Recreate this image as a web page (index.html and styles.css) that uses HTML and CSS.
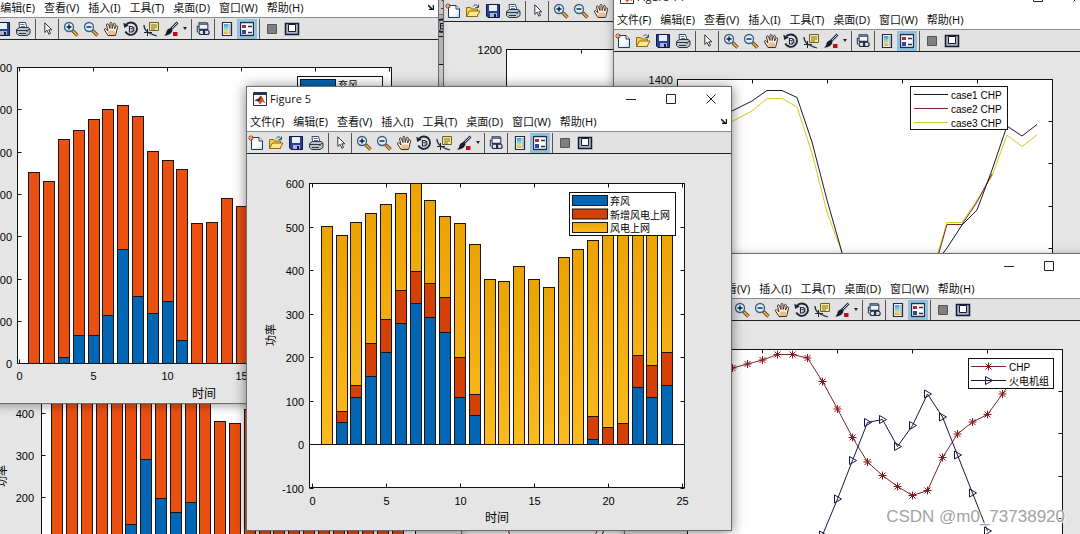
FILE: index.html
```html
<!DOCTYPE html>
<html lang="zh-CN">
<head>
<meta charset="utf-8">
<title>Figure 5</title>
<link rel="stylesheet" href="styles.css">
</head>
<body>
<svg class="sprites" aria-hidden="true">
  <defs>
    <linearGradient id="g-page" x1="0" y1="0" x2="1" y2="1"><stop offset="0.5" stop-color="#fff"/><stop offset="1" stop-color="#c4dcf2"/></linearGradient>
    <linearGradient id="g-bar" x1="0" y1="0" x2="0" y2="1"><stop offset="0" stop-color="#5a8fd8"/><stop offset="0.35" stop-color="#69cfe0"/><stop offset="0.7" stop-color="#e8df70"/><stop offset="1" stop-color="#f0a040"/></linearGradient>
    <linearGradient id="g-wind" x1="0" y1="0" x2="0" y2="1"><stop offset="0" stop-color="#eba202"/><stop offset="1" stop-color="#fcba20"/></linearGradient>
  </defs>
  <symbol id="i-new" viewBox="0 0 16 16"><path d="M3.5 2.5h7.5l3.500 3.500v8.500h-11z" fill="url(#g-page)" stroke="#1f3556"/><path d="M11 2.500v3.500h3.500" fill="#fff" stroke="#1f3556"/><path d="M0 3h6M3 0v6M1 1l4 4M5 1L1 5" stroke="#b8431c"/><circle cx="3" cy="3" r="1" fill="#ffd080"/></symbol>
  <symbol id="i-open" viewBox="0 0 16 16"><path d="M1.500 13.500v-9h4l1 1.500h6v7.500z" fill="#f5cf4a" stroke="#8a6a14"/><path d="M1.500 13.500l3-5.500h10.500l-3 5.500z" fill="#ffe98a" stroke="#8a6a14"/><path d="M8 3.500c2-2.500 4-2 5 .5M13.500 1.500v3h-3" fill="none" stroke="#2a4a7a"/></symbol>
  <symbol id="i-save" viewBox="0 0 16 16"><path d="M1.500 1.500h13v13h-11.500l-1.500-1.500z" fill="#27409a" stroke="#0d1747"/><path d="M4 2h8v6H4z" fill="#e8f0fb"/><path d="M5 10h7v4H5z" fill="#aab4cc"/><path d="M9 11h2v3H9z" fill="#101c48"/></symbol>
  <symbol id="i-print" viewBox="0 0 16 16"><path d="M4.500 7L4 1.500h6.500L12 7z" fill="#fff" stroke="#3a4a66"/><path d="M5.500 3.500h4M6 5.500h4" stroke="#5577aa"/><path d="M1.500 8.500l3-2h9l1.500 2v4l-3 2h-8l-2.500-2z" fill="#bcc4cf" stroke="#2c3442"/><path d="M2 9.500h10l3-1.500M4 12.500h7" stroke="#2c3442" fill="none"/><path d="M11 10.500h2" stroke="#4aa04a"/></symbol>
  <symbol id="i-pointer" viewBox="0 0 16 16"><path d="M5.500 1.500v11l2.600-2.500 2 4.500 1.900-.9-2-4.100h3.500z" fill="#fff" stroke="#151a26"/></symbol>
  <symbol id="i-zin" viewBox="0 0 16 16"><path d="M9.500 9.500l5 5" stroke="#6b4515" stroke-width="3.400"/><path d="M10 10l4.500 4.500" stroke="#eeb357" stroke-width="1.600"/><circle cx="6" cy="6" r="4.500" fill="#d9f1fc" stroke="#3a5b86" stroke-width="1.300"/><path d="M3.500 6h5M6 3.500v5" stroke="#101c30" stroke-width="1.400"/></symbol>
  <symbol id="i-zout" viewBox="0 0 16 16"><path d="M9.500 9.500l5 5" stroke="#6b4515" stroke-width="3.400"/><path d="M10 10l4.500 4.500" stroke="#eeb357" stroke-width="1.600"/><circle cx="6" cy="6" r="4.500" fill="#d9f1fc" stroke="#3a5b86" stroke-width="1.300"/><path d="M3.500 6h5" stroke="#101c30" stroke-width="1.400"/></symbol>
  <symbol id="i-pan" viewBox="0 0 16 16"><path d="M5 14.500L1.500 9c-.5-1.500 1-2 2-.5L5 10 3.500 4c0-1.500 1.500-1.500 2-.3L7 7.500V2.300C7 1 8.700 1 8.900 2.300L9.200 7.500 10.500 3c.4-1.200 2-.8 1.800.5L11.500 8l1.500-2.700c.7-1 2-.3 1.600.9L12.500 14.500z" fill="#fff3e4" stroke="#3d302a"/><path d="M5.500 14c-1-3 0-4.500 3.500-4.500s4 2 3 4.500z" fill="#efbd8c"/></symbol>
  <symbol id="i-rotate" viewBox="0 0 16 16"><path d="M3 3.800A6.200 6.200 0 1 1 2.300 10.500" fill="none" stroke="#1d2636" stroke-width="1.900"/><path d="M.3 1.800l.9 5.200 4.600-2.600z" fill="#1d2636"/><path d="M6.500 5.500h2.500l1.800 1.500v2.500l-1.800 1.500H6.500z" fill="#f4f7fb" stroke="#1d2636" stroke-width="1.200"/><path d="M6.500 7.500h2.500v3M9 7.500l1.500-.8" fill="none" stroke="#1d2636" stroke-width=".7"/></symbol>
  <symbol id="i-cursor" viewBox="0 0 16 16"><path d="M6.500 1.500h9v8h-9z" fill="#f6e894" stroke="#6e6024"/><path d="M8 4h6M8 6h6M8 8h4" stroke="#7e6f2a"/><path d="M1 4c0 5 3 8 13 11" fill="none" stroke="#22345a" stroke-width="1.300"/><path d="M1 11.500h8M4.500 8v7" stroke="#20242c"/></symbol>
  <symbol id="i-brush" viewBox="0 0 16 16"><path d="M14.500 1.500L7 9" stroke="#26324a" stroke-width="2.600"/><path d="M14 2L9 7" stroke="#b9c8de"/><path d="M7.500 7.500l2 2c-1 3-4 5-8.500 5 2-1.500 2-2 2.500-4 .5-2 2-3 4-3z" fill="#171c28"/><path d="M10 11h4.500v4H10z" fill="#b3141c"/></symbol>
  <symbol id="i-link" viewBox="0 0 16 16"><path d="M3.500 9.500v-8h9l1 1v7M1.500 12.500v-7h2M3.500 9h10" fill="#f0f5fc" stroke="#263652" stroke-width="1.200"/><path d="M4 3h9" stroke="#263652" stroke-width="1.400"/><rect x="3.500" y="10" width="6.500" height="4.800" rx="2.300" fill="#dbe4f2" stroke="#1f2b44" stroke-width="1.300"/><rect x="8.500" y="10" width="6.500" height="4.800" rx="2.300" fill="none" stroke="#1f2b44" stroke-width="1.300"/></symbol>
  <symbol id="i-colorbar" viewBox="0 0 16 16"><path d="M3.500 1.500h9v13h-9z" fill="#f6f8fa" stroke="#1f2a44" stroke-width="1.200"/><path d="M5 3h4.500v10H5z" fill="url(#g-bar)"/><path d="M11 3v10" stroke="#8090a8"/></symbol>
  <symbol id="i-legend" viewBox="0 0 16 16"><path d="M1.500 1.500h13v13h-13z" fill="#fff" stroke="#1f2a44" stroke-width="1.300"/><path d="M3 4h4v3H3z" fill="#b4283a"/><path d="M3 9h4v4H3z" fill="#2a47a8"/><path d="M9 5.500h4M9 11.500h4" stroke="#26304a" stroke-width="1.300"/></symbol>
  <symbol id="i-plain" viewBox="0 0 16 16"><path d="M3.500 3.500h9v9h-9z" fill="#808080" stroke="#555"/></symbol>
  <symbol id="i-dock" viewBox="0 0 16 16"><path d="M1.500 2.500h13v11h-13z" fill="#a9b3c4" stroke="#151c30" stroke-width="1.500"/><path d="M4.500 3.500h7v7h-7z" fill="#fff" stroke="#151c30"/></symbol>
  <symbol id="i-matlab" viewBox="0 0 14 14"><path d="M.5.500h13v13H.5z" fill="#fff" stroke="#26344d"/><path d="M1 1h12v2H1z" fill="#26344d"/><path d="M1.500 8.500L5 6.500l3-3 1.500 2 3 6-3-1.800-2.500 2.800-2-3z" fill="#d9541a"/><path d="M1.500 8.500L5 6.500 6.500 8 5 9.500z" fill="#274f86"/><path d="M8 3.500L7 8l-2 1.500-.5-1z" fill="#1a2233"/></symbol>
</svg>

<template id="chrome">
  <header class="title">
    <svg class="logo" aria-hidden="true"><use href="#i-matlab"/></svg>
    <span class="name"></span>
    <span class="controls">
      <button type="button" aria-label="最小化"><svg viewBox="0 0 10 10"><path d="M0 5.500h10"/></svg></button>
      <button type="button" aria-label="最大化"><svg viewBox="0 0 10 10"><path d="M.5.500h9v9h-9z"/></svg></button>
      <button type="button" aria-label="关闭"><svg viewBox="0 0 10 10"><path d="M.5.500l9 9M9.500.500l-9 9"/></svg></button>
    </span>
  </header>
  <nav class="menu">
    <button type="button">文件(F)</button>
    <button type="button">编辑(E)</button>
    <button type="button">查看(V)</button>
    <button type="button">插入(I)</button>
    <button type="button">工具(T)</button>
    <button type="button">桌面(D)</button>
    <button type="button">窗口(W)</button>
    <button type="button">帮助(H)</button>
    <svg class="undock" viewBox="0 0 6 6" aria-hidden="true"><path d="M0 1l4 4M5.500 1v4.500H1"/></svg>
  </nav>
  <div class="tools" role="toolbar">
    <button type="button" aria-label="新建"><svg><use href="#i-new"/></svg></button>
    <button type="button" aria-label="打开"><svg><use href="#i-open"/></svg></button>
    <button type="button" aria-label="保存"><svg><use href="#i-save"/></svg></button>
    <button type="button" aria-label="打印"><svg><use href="#i-print"/></svg></button>
    <i class="sep"></i>
    <button type="button" class="slim" aria-label="编辑绘图"><svg><use href="#i-pointer"/></svg></button>
    <i class="sep"></i>
    <button type="button" aria-label="放大"><svg><use href="#i-zin"/></svg></button>
    <button type="button" aria-label="缩小"><svg><use href="#i-zout"/></svg></button>
    <button type="button" aria-label="平移"><svg><use href="#i-pan"/></svg></button>
    <button type="button" aria-label="三维旋转"><svg><use href="#i-rotate"/></svg></button>
    <button type="button" aria-label="数据游标"><svg><use href="#i-cursor"/></svg></button>
    <button type="button" aria-label="刷亮"><svg><use href="#i-brush"/></svg></button>
    <i class="caret"></i>
    <i class="sep"></i>
    <button type="button" class="slim" aria-label="链接绘图"><svg><use href="#i-link"/></svg></button>
    <i class="sep"></i>
    <button type="button" aria-label="颜色栏"><svg><use href="#i-colorbar"/></svg></button>
    <button type="button" class="on" aria-label="图例" aria-pressed="true"><svg><use href="#i-legend"/></svg></button>
    <i class="sep"></i>
    <button type="button" aria-label="隐藏绘图工具"><svg><use href="#i-plain"/></svg></button>
    <button type="button" aria-label="显示绘图工具"><svg><use href="#i-dock"/></svg></button>
  </div>
</template>

<main class="desktop">
  <section class="window w-rear" data-name=""><svg class="plot" data-plot="rear"></svg></section>
  <section class="window w-low" data-name=""><svg class="plot" data-plot="low"></svg></section>
  <section class="window w-mid" data-name=""><svg class="plot" data-plot="mid"></svg></section>
  <section class="window w-case" data-name="Figure 14"><svg class="plot" data-plot="cases"></svg></section>
  <section class="window w-units" data-name=""><svg class="plot" data-plot="units"></svg></section>
  <section class="window w-left-low" data-name=""><svg class="plot" data-plot="leftLow"></svg></section>
  <section class="window w-left" data-name=""><svg class="plot" data-plot="left"></svg></section>
  <section class="window w-front" data-name="Figure 5"><svg class="plot" data-plot="front"></svg></section>
  <p class="mark">CSDN @m0_73738920</p>
</main>
<script src="plots.js"></script>
</body>
</html>
```

FILE: styles.css
```css
* {
  box-sizing: border-box;
}

body {
  margin: 0;
  background: #e6e6e6;
  color: #111;
  font-family: "Liberation Sans", "Noto Sans CJK SC", sans-serif;
  font-size: 11px;
}

button {
  margin: 0;
  padding: 0;
  border: 0;
  background: none;
  color: inherit;
  font: inherit;
}

svg {
  display: block;
}

.sprites {
  position: absolute;
  width: 0;
  height: 0;
}

.desktop {
  position: relative;
  height: 100vh;
  overflow: hidden;
}

/* Windows on the desktop, back to front */
.window {
  position: absolute;
  display: flex;
  flex-direction: column;
  width: 486px;
  height: 445px;
  border: 1px solid #6c6c6c;
  background: #fff;
  box-shadow: 0 2px 9px rgba(0, 0, 0, 0.35);
}

.w-rear { left: 264px; top: -31px; }
.w-low { left: 399px; top: 259px; }
.w-mid { left: 443px; top: -46px; }
.w-case { left: 613px; top: -16px; }
.w-units { left: 624px; top: 253px; }
.w-left-low { left: -24px; top: 239px; }
.w-left { left: -47px; top: -28px; height: 432px; }
.w-front { left: 246px; top: 86px; box-shadow: 0 1px 12px rgba(0, 0, 0, 0.5); }

.title {
  display: flex;
  flex: none;
  align-items: center;
  height: 23px;
  padding: 0 15px 0 6px;
  font-family: "Open Sans", "Noto Sans CJK SC", sans-serif;
}

.logo {
  width: 14px;
  height: 14px;
  margin-right: 3px;
}

.controls {
  display: flex;
  gap: 30px;
  margin-left: auto;
}

.controls svg {
  width: 10px;
  height: 10px;
  fill: none;
  stroke: #222;
}

.menu {
  display: flex;
  flex: none;
  align-items: center;
  gap: 9px;
  height: 21px;
  padding: 0 4px 0 3px;
  font-family: "Noto Sans", "Noto Sans CJK SC", sans-serif;
  white-space: nowrap;
}

.undock {
  width: 6px;
  height: 6px;
  margin-left: auto;
  fill: none;
  stroke: #111;
  stroke-width: 1.500;
}

.tools {
  display: flex;
  flex: none;
  align-items: center;
  gap: 4px;
  height: 23px;
  padding-left: 1px;
  border-top: 1px solid #8c8c8c;
  border-bottom: 1px solid #222;
  background: #e2e2e2;
}

.tools button {
  flex: none;
  width: 16px;
}

.tools .slim {
  width: 14px;
}

.tools button svg {
  width: 100%;
  height: 16px;
}

.tools .slim svg {
  height: 15px;
}

.tools .on {
  background: #b9dbf0;
  outline: 2px solid #8dbfe0;
}

.sep {
  flex: none;
  width: 1px;
  height: 20px;
  background: #555;
}

.caret {
  width: 4px;
  border: 2px solid transparent;
  border-top: 3px solid #222;
  border-bottom: 0;
}

.plot {
  flex: 1;
  width: 100%;
  min-height: 0;
  background: #e5e5e5;
  font-size: 11px;
}

.box { fill: #fff; stroke: #111; }
.line { fill: none; stroke: #111; }
.label { font-size: 12px; }
.key { font-size: 10px; }
.end { text-anchor: end; }
.center { text-anchor: middle; }

.bar { stroke: #171717; }
.blue { fill: #0366b4; }
.orange { fill: #ea5010; }
.red { fill: #d54006; }
.wind { fill: url(#g-wind); }

.navy { stroke: #17173c; }
.maroon { stroke: #79282a; }
.gold { stroke: #d5cc12; }
.star { fill: none; stroke: #86191c; }
.tri { fill: none; stroke: #17173c; }

.mark {
  position: absolute;
  right: 15px;
  bottom: 6px;
  margin: 0;
  color: #a3a3a3;
  font-size: 17px;
  line-height: 22px;
  text-shadow: 1px 1px 1px #fff, -1px -1px 1px #fff;
}
```

FILE: plots.js
```js
const chrome = document.getElementById('chrome');
document.querySelectorAll('.window').forEach((win) => {
  const parts = chrome.content.cloneNode(true);
  parts.querySelector('.name').textContent = win.dataset.name;
  win.prepend(parts);
});

const rect = (cls, x, y, w, h) => `<rect class="${cls}" x="${x}" y="${y}" width="${w}" height="${h}"/>`;
const text = (x, y, s, cls = '') => `<text class="${cls}" x="${x}" y="${y}">${s}</text>`;
const line = (pts, cls = '') => `<polyline class="line ${cls}" points="${pts.join(' ')}"/>`;
const side = (x, y, s) => `<text class="center" transform="translate(${x} ${y}) rotate(-90)">${s}</text>`;
const snap = (v) => Math.round(v) + 0.5;

// Axes frame with tick marks on all four sides
function frame(a, xs, ys) {
  let out = rect('box', a.x, a.y, a.w, a.h);
  const r = a.x + a.w;
  const b = a.y + a.h;
  xs.forEach((x) => {
    out += line([x, a.y, x, a.y + 4]) + line([x, b, x, b - 4]);
  });
  ys.forEach((y) => {
    out += line([a.x, y, a.x + 4, y]) + line([r, y, r - 4, y]);
  });
  return out;
}

// Stacked bars: each layer holds the upper edge of its segments, tallest first
function bars(x0, y0, scale, layers) {
  let out = '';
  layers.forEach(([cls, tops]) => {
    tops.forEach((v, i) => {
      if (!v) return;
      const h = Math.round(v * scale);
      out += rect('bar ' + cls, snap(x0 + (i + 1) * 14.8 - 6), y0 - h, 11, h);
    });
  });
  return out;
}

const steps = (from, step, n) => Array.from({ length: n }, (_, i) => snap(from + i * step - 0.5));

const plots = {
  front() {
    const xs = steps(312.5, 74, 6);
    const ys = steps(183.5, 43.5, 8);
    let out = frame({ x: 309.5, y: 183.5, w: 375, h: 304 }, xs, ys);
    out += bars(312, 444.5, 0.435, [
      ['wind', [500, 481, 510, 530, 551, 576, 600, 560, 525, 509, 459, 380, 375, 410, 380, 360, 430, 449, 470, 500, 510, 520, 510, 500]],
      ['red', [0, 75, 135, 233, 287, 353, 397, 371, 337, 200, 116, 0, 0, 0, 0, 0, 0, 0, 64, 40, 48, 204, 181, 211]],
      ['blue', [0, 50, 107, 156, 211, 278, 323, 293, 257, 107, 67, 0, 0, 0, 0, 0, 0, 0, 11, 0, 0, 130, 107, 135]]
    ]);
    out += line([309, 444.5, 685, 444.5]);
    ys.forEach((y, i) => { out += text(304, y + 4, 600 - i * 100, 'end'); });
    xs.forEach((x, i) => { out += text(x, 505, i * 5, 'center'); });
    out += text(497, 522, '时间', 'label center') + side(275, 335, '功率');
    out += rect('box', 569.5, 192.5, 106, 43);
    [['blue', '弃风'], ['red', '新增风电上网'], ['wind', '风电上网']].forEach(([cls, s], i) => {
      out += rect('bar ' + cls, 572.5, 195.5 + i * 13.5, 35, 10) + text(610, 205 + i * 13.5, s, 'key');
    });
    return ['247 154 484 376', out];
  },
  left() {
    const xs = steps(19.5, 74, 6);
    const ys = steps(67.5, 42.3, 8);
    let out = frame({ x: 17.5, y: 67.5, w: 374, h: 296 }, xs, ys);
    out += bars(19.5, 363.5, 0.4235, [
      ['orange', [450, 430, 530, 549, 575, 600, 610, 584, 500, 480, 459, 330, 333, 390, 370, 360, 380, 370]],
      ['blue', [0, 0, 15, 66, 66, 113, 270, 158, 118, 147, 55]]
    ]);
    ys.forEach((y, i) => { out += text(12, y + 4, i < 7 ? 700 - i * 100 : 0, 'end'); });
    xs.forEach((x, i) => { out += text(x, 380, i * 5, 'center'); });
    out += text(204, 398, '时间', 'label center');
    out += rect('box', 297.5, 76.5, 85, 30) + rect('bar blue', 300.5, 79.5, 35, 10) + text(338, 89, '弃风', 'key');
    return ['-46 40 484 363', out];
  },
  leftLow() {
    const xs = steps(43.5, 74, 6);
    const ys = steps(328.5, 42.3, 7);
    let out = frame({ x: 41.5, y: 328.5, w: 374, h: 254 }, xs, ys);
    out += bars(42.5, 582.5, 0.423, [
      ['orange', [500, 480, 510, 530, 550, 570, 590, 560, 520, 510, 460, 380, 375, 410, 380, 360, 430, 450, 470, 500, 510, 520, 510, 500]],
      ['blue', [0, 0, 0, 0, 0, 138, 290, 198, 165, 188]]
    ]);
    ys.forEach((y, i) => { out += text(34, y + 4, 600 - i * 100, 'end'); });
    out += side(6, 476, '功率');
    return ['-23 307 484 376', out];
  },
  mid() {
    const out = frame({ x: 506.5, y: 49.5, w: 375, h: 300 }, [581.5], []) + text(502, 54, '1200', 'end');
    return ['444 22 484 376', out];
  },
  rear() {
    return ['265 37 484 376', frame({ x: 327.5, y: 64.5, w: 375, h: 300 }, [], [])];
  },
  low() {
    const out = rect('box', 461.5, 356.5, 375, 254) + line([500, 510, 514, 545], 'maroon')
      + line([590, 545, 605, 515], 'maroon') + line([598, 545, 606, 525], 'navy');
    return ['400 327 484 376', out];
  },
  cases() {
    let out = frame({ x: 677.5, y: 79.5, w: 375, h: 300 }, [752.5, 827.5, 902.5, 977.5], [121.5, 163.5, 206.5, 248.5]);
    out += text(673, 84, '1400', 'end');
    out += line([717, 130, 732, 121.5, 752, 111, 767, 98.5, 782, 98.5, 797, 107, 812, 153, 827, 212, 842, 253], 'gold');
    out += line([937, 256, 947, 222.5, 962, 222.5, 977, 200, 992, 176, 1007, 135, 1022, 146.5, 1037, 135], 'gold');
    out += line([938, 256, 947, 224.5, 962, 224.5, 977, 202, 992, 174], 'maroon');
    out += line([717, 118, 732, 111, 752, 101, 767, 90.5, 782, 90.5, 797, 97.5, 812, 142, 827, 200, 843, 256], 'navy');
    out += line([941, 256, 947, 248, 962, 225, 977, 210, 992, 170, 1007, 126, 1022, 136, 1037, 124.5], 'navy');
    out += rect('box', 910.5, 86.5, 97, 43);
    ['navy', 'maroon', 'gold'].forEach((cls, i) => {
      out += line([914, 94.5 + i * 14, 948, 94.5 + i * 14], cls) + text(951, 99 + i * 14, `case${i + 1} CHP`, 'key');
    });
    return ['614 52 484 376', out];
  },
  units() {
    const star = ([x, y]) => `<path class="star" d="M${x - 4} ${y}h8M${x} ${y - 4}v8M${x - 3} ${y - 3}l6 6M${x + 3} ${y - 3}l-6 6"/>`;
    const tri = ([x, y]) => `<path class="tri" d="M${x - 3} ${y - 4}l7 4l-7 4z"/>`;
    const chp = [[732.5, 368], [747.5, 364], [762.5, 360], [777.5, 354.5], [792.5, 354.5], [807.5, 358], [822.5, 381.5], [837.5, 409], [852.5, 437.5], [867.5, 462], [882.5, 475.5], [897.5, 486.5], [912.5, 495.5], [927.5, 490.5], [942.5, 457.5], [957.5, 434], [972.5, 422], [987.5, 414.5], [1002.5, 394]];
    const unit = [[822.5, 535], [837.5, 499], [852.5, 460.5], [867.5, 422.5], [882.5, 419.5], [897.5, 446.5], [912.5, 425.5], [927.5, 394], [942.5, 417], [957.5, 455], [972.5, 493], [987.5, 531]];
    let out = frame({ x: 687.5, y: 349.5, w: 375, h: 300 }, [762.5, 837.5, 912.5, 987.5], [391.5, 433.5, 476.5, 518.5]);
    out += line(chp.concat([[1008, 386]]), 'maroon') + chp.map(star).join('');
    out += line(unit, 'navy') + unit.map(tri).join('');
    out += rect('box', 968.5, 358.5, 85, 30);
    out += line([971, 366.5, 1006, 366.5], 'maroon') + star([988.5, 366.5]) + text(1009, 371, 'CHP', 'key');
    out += line([971, 380.5, 1006, 380.5], 'navy') + tri([988.5, 380.5]) + text(1009, 385, '火电机组', 'key');
    return ['625 321 484 376', out];
  }
};

document.querySelectorAll('[data-plot]').forEach((svg) => {
  const [viewBox, content] = plots[svg.dataset.plot]();
  svg.setAttribute('viewBox', viewBox);
  svg.setAttribute('preserveAspectRatio', 'xMinYMin slice');
  svg.innerHTML = content;
});
```
